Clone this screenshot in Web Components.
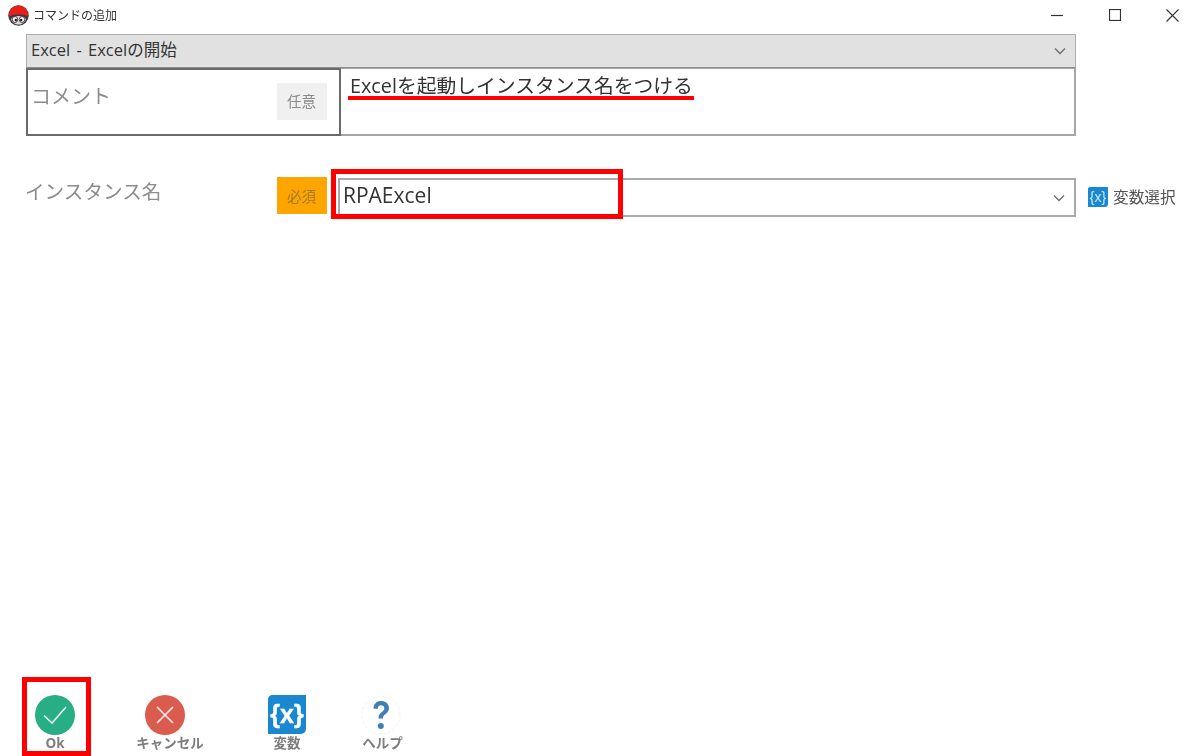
<!DOCTYPE html>
<html lang="ja"><head><meta charset="utf-8"><title>コマンドの追加</title>
<style>
html,body{margin:0;height:100%;background:#fff;overflow:hidden}
body{font-family:"Open Sans","Noto Sans CJK JP",sans-serif}
</style></head><body>
<command-dialog>
  <title-bar slot="title">コマンドの追加</title-bar>
  <select-bar slot="form">Excel - Excelの開始</select-bar>
  <comment-row slot="form" label="コメント">Excelを起動しインスタンス名をつける</comment-row>
  <instance-row slot="form" label="インスタンス名" value="RPAExcel"></instance-row>
  <tool-bar slot="footer"></tool-bar>
</command-dialog>
<anno-layer></anno-layer>
<script>
const FONT='"Open Sans","Noto Sans CJK JP",sans-serif';
function def(name,html,init){
  customElements.define(name,class extends HTMLElement{
    constructor(){super();const r=this.attachShadow({mode:'open'});r.innerHTML=html;}
    connectedCallback(){if(init)init(this,this.shadowRoot);}
  });
}
const chevron='<svg width="12" height="8" viewBox="0 0 12 8"><path d="M1 1.500 6 6.500 11 1.500" fill="none" stroke="#6e6e6e" stroke-width="1.400"/></svg>';

def('command-dialog',`<style>
:host{display:flex;flex-direction:column;height:756px;width:1200px;font-family:${FONT};filter:blur(.35px)}
.form{display:flex;flex-direction:column;padding-left:26px;width:1174px;box-sizing:border-box}
.spacer{flex:1}
</style><slot name="title"></slot><div class="form"><slot name="form"></slot></div><div class="spacer"></div><slot name="footer"></slot>`);

def('title-bar',`<style>
:host{display:flex;align-items:center;height:34px;padding:0 0 0 8px;box-sizing:border-box;font-size:12px;color:#333}
.logo{width:21px;height:21px;margin-right:5px;margin-top:-4px}
.t{margin-top:-4px;margin-left:-1px}
.sp{flex:1}
.btns{display:flex;margin-top:-4px;margin-right:-1px}
.b{width:57.500px;height:30px;display:flex;align-items:center;justify-content:center}
</style>
<svg class="logo" viewBox="0 0 21 21"><circle cx="10.500" cy="10.500" r="10.200" fill="#3a3a3a"/><path d="M.6 12C.6 5 5 .6 10.500 .6S20.400 5 20.400 12C18 10 14.500 9.500 10.500 9.500S3 10 .6 12z" fill="#e8201c"/><path d="M3 14c1-2 4-3 7.500-3s6.500 1 7.500 3c-1 3.500-4 5.500-7.500 5.500S4 17.500 3 14z" fill="#d8d8d8"/><ellipse cx="7" cy="14.500" rx="2.700" ry="3" fill="#fff" stroke="#222" stroke-width=".8"/><ellipse cx="14" cy="14.500" rx="2.700" ry="3" fill="#fff" stroke="#222" stroke-width=".8"/><circle cx="7.800" cy="15" r="1.200" fill="#111"/><circle cx="13.200" cy="15" r="1.200" fill="#111"/></svg>
<span class="t"><slot></slot></span><span class="sp"></span>
<div class="btns">
<div class="b"><svg width="12" height="12"><path d="M0 6.500H12" stroke="#333" stroke-width="1.200"/></svg></div>
<div class="b"><svg width="12" height="12"><rect x=".5" y=".5" width="11" height="11" fill="none" stroke="#333" stroke-width="1.200"/></svg></div>
<div class="b"><svg width="13" height="13"><path d="M.5.500 12.500 12.500M12.500.500 .5 12.500" stroke="#333" stroke-width="1.100"/></svg></div>
</div>`);

def('select-bar',`<style>
:host{display:flex;align-items:center;justify-content:space-between;width:1050px;height:34px;box-sizing:border-box;background:#e1e1e1;border:1px solid #adadad;border-bottom-color:#8e8e8e;padding:0 9px 0 4px;font-size:16.500px;word-spacing:2px;color:#333}
svg{display:block}
span{margin-top:-5px}
</style><span><slot></slot></span>${chevron}`);

def('comment-row',`<style>
:host{display:flex;width:1050px;height:68px}
.l{width:315px;box-sizing:border-box;border:2px solid #6a6a6a;display:flex;justify-content:space-between;padding:12px 12px 0 3px;color:#8c8c8c;font-size:20px;line-height:30px}
.v{flex:1;box-sizing:border-box;border:solid #a6a6a6;border-width:1px 2px 2px 0;padding:1px 0 0 9px;font-size:19.800px;color:#333;line-height:32px}
.bad{align-self:flex-start;margin-top:1px}
</style><div class="l"><span id="lab"></span><tag-badge class="bad" tone="plain">任意</tag-badge></div><div class="v"><span><slot></slot></span></div>`,
(h,r)=>{r.getElementById('lab').textContent=h.getAttribute('label');});

def('tag-badge',`<style>
:host{display:flex;align-items:center;justify-content:center;width:50px;height:37px;background:#f0f0f0;color:#8c8c8c;font-size:14.500px;flex:none;box-sizing:border-box;padding-right:1px}
:host([tone="req"]){background:#ffa500;color:#a07a2a}
</style><slot></slot>`);

def('instance-row',`<style>
:host{display:flex;align-items:flex-start;width:1174px;margin:41px 0 0 -1px;font-family:${FONT}}
.lab{width:252px;color:#8c8c8c;font-size:19.600px;line-height:30px;flex:none}
.box{margin-left:11px;width:738px;height:39px;margin-top:1px;box-sizing:border-box;border:2px solid #a9a9a9;display:flex;align-items:center;justify-content:space-between;padding:0 9px 0 3px;font-size:21px;color:#333;background:#fff}
#val{margin-top:-5px}
.vs{display:flex;align-items:center;margin:0 0 0 12px;padding-top:8px;font-size:15.700px;color:#555}
.ic{margin-right:5px}
</style><span class="lab" id="lab"></span><tag-badge tone="req">必須</tag-badge>
<div class="box"><span id="val"></span>${chevron}</div>
<div class="vs"><svg class="ic" width="20" height="20" viewBox="0 0 20 20"><path d="M2 0H20V17a3 3 0 0 1-3 3H0V2a2 2 0 0 1 2-2z" fill="#1a88d1"/><text x="10" y="14.500" text-anchor="middle" font-size="14" fill="#cfe8f8" font-family="Liberation Sans">{x}</text></svg>変数選択</div>`,
(h,r)=>{r.getElementById('lab').textContent=h.getAttribute('label');r.getElementById('val').textContent=h.getAttribute('value');});

def('tool-button',`<style>
:host{display:flex;flex-direction:column;align-items:center;width:var(--w,60px);font-size:13.500px;font-weight:700;color:#7d7d7d;line-height:16px;flex:none}
.i{height:40px;display:block;margin-right:var(--ir,0)}
</style><div class="i"><slot name="icon"></slot></div><slot></slot>`);

def('tool-bar',`<style>
:host{display:flex;align-items:flex-start;height:61px;box-sizing:border-box;padding:0 0 0 25px;position:relative}
svg{display:block}
.mark{position:absolute;left:22px;top:-18px;width:69px;height:79px;box-sizing:border-box;border:5px solid #f00}
</style>
<tool-button style="--w:60px"><svg slot="icon" width="40" height="40"><circle cx="20" cy="20" r="20" fill="#27ae84"/><path d="M9 20.500 17 28 31 12" fill="none" stroke="#e6f7f0" stroke-width="1.600"/></svg>Ok</tool-button>
<tool-button style="--w:90px;--ir:10px;margin-left:40px"><svg slot="icon" width="40" height="40"><circle cx="20" cy="20" r="20" fill="#d95c4e"/><path d="M12 12 28 28M28 12 12 28" stroke="#fbe9e6" stroke-width="1.700"/></svg>キャンセル</tool-button>
<tool-button style="--w:60px;margin-left:42px"><svg slot="icon" width="40" height="40" viewBox="0 0 40 40"><path d="M5 0H39V34a5 5 0 0 1-5 5H1V5a5 5 0 0 1 4-5z" fill="#1a88d1"/><text x="20" y="28" text-anchor="middle" font-size="25" fill="#fff" font-family="Liberation Sans" stroke="#fff" stroke-width=".4">{x}</text></svg>変数</tool-button>
<tool-button style="--w:60px;--ir:4px;margin-left:35.500px"><svg slot="icon" width="40" height="40" viewBox="0 0 40 40"><circle cx="20" cy="20" r="19" fill="#fff" stroke="#eef2f6" stroke-dasharray="3 2"/><path d="M12.500 13.500c0-5 3.500-7.500 7.500-7.500s8 2.500 8 7c0 3.500-2 5-4 6.500-1.500 1.200-2 2-2 4h-4.500c0-3 .8-4.500 3-6.200 1.800-1.400 2.800-2.300 2.800-4 0-1.800-1.400-3-3.300-3-2 0-3.300 1.400-3.400 3.700z" fill="#3f7fb5"/><circle cx="19.800" cy="31" r="3" fill="#3f7fb5"/></svg>ヘルプ</tool-button>
<div class="mark"></div>`);

def('anno-layer',`<style>
:host{display:block;position:absolute;left:0;top:0;width:1200px;height:756px;pointer-events:none}
.a{position:absolute;box-sizing:border-box}
.ul{left:348px;top:96px;width:346px;height:4px;background:#f00}
.rb{left:331px;top:169px;width:292px;height:50px;border:5px solid #f00}
</style><div class="a ul"></div><div class="a rb"></div>`);
</script>
</body></html>
